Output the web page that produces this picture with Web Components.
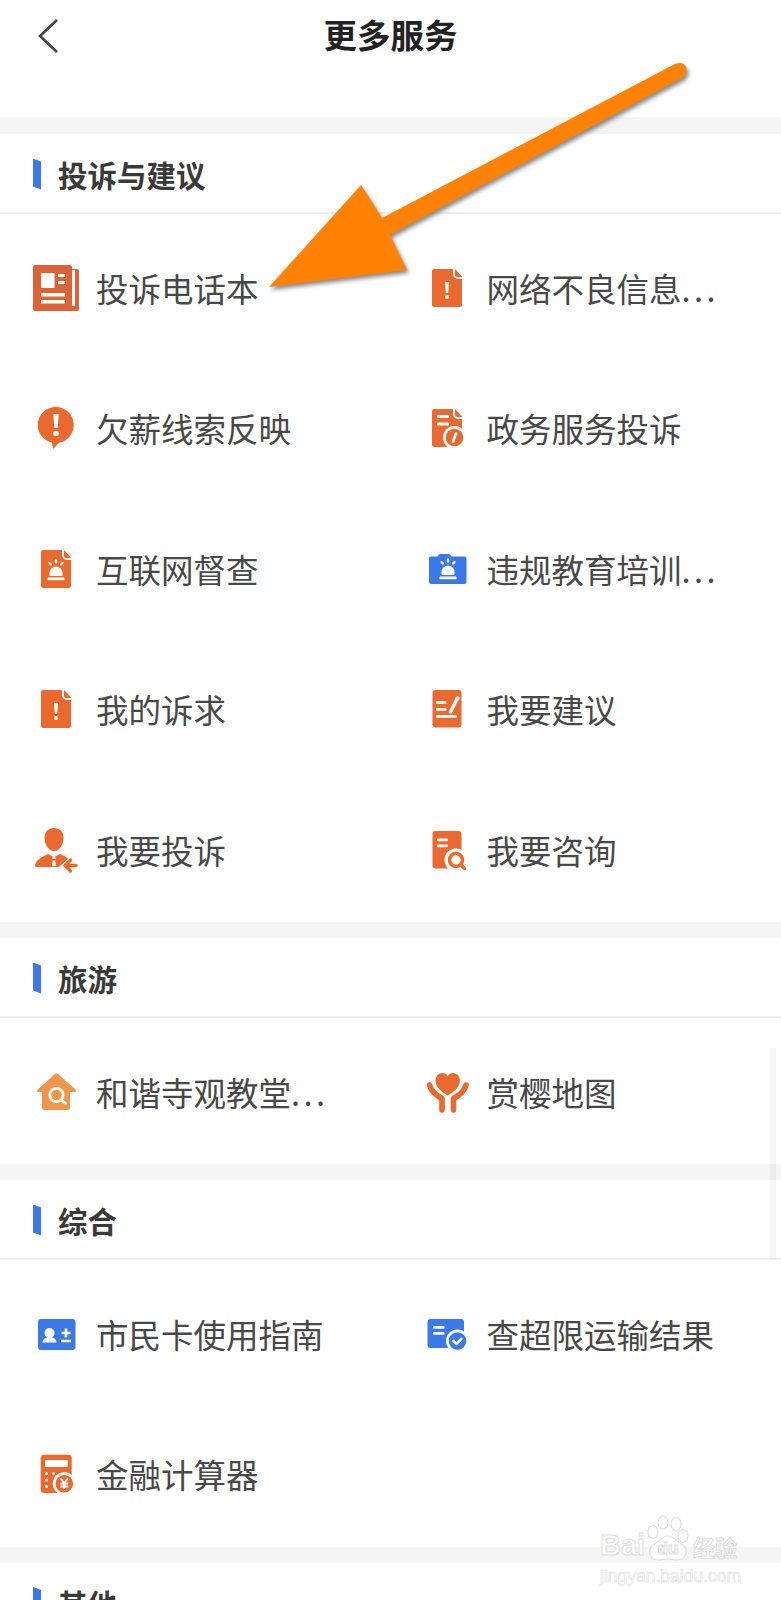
<!DOCTYPE html>
<html lang="zh">
<head>
<meta charset="utf-8">
<title>更多服务</title>
<style>
  html, body { margin: 0; height: 1600px; overflow: hidden; background: #fff; }
  body { font-family: "Noto Sans CJK SC", "Liberation Sans", sans-serif; }
  .dots { letter-spacing: 3.500px; }
</style>
</head>
<body>
<service-page>
  <top-bar label="更多服务"></top-bar>
  <service-section label="投诉与建议">
    <service-item icon="news">投诉电话本</service-item>
    <service-item icon="fileAlert">网络不良信息<span class="dots">...</span></service-item>
    <service-item icon="bubble">欠薪线索反映</service-item>
    <service-item icon="fileInfo">政务服务投诉</service-item>
    <service-item icon="fileSiren">互联网督查</service-item>
    <service-item icon="camSiren">违规教育培训<span class="dots">...</span></service-item>
    <service-item icon="fileAlert">我的诉求</service-item>
    <service-item icon="notePen">我要建议</service-item>
    <service-item icon="person">我要投诉</service-item>
    <service-item icon="docSearch">我要咨询</service-item>
  </service-section>
  <service-section label="旅游">
    <service-item icon="house">和谐寺观教堂<span class="dots">...</span></service-item>
    <service-item icon="heart">赏樱地图</service-item>
  </service-section>
  <service-section label="综合">
    <service-item icon="card">市民卡使用指南</service-item>
    <service-item icon="cardCheck">查超限运输结果</service-item>
    <service-item icon="calc">金融计算器</service-item>
  </service-section>
  <service-section label="其他"></service-section>
  <scroll-track></scroll-track>
  <pointer-arrow></pointer-arrow>
  <paw-mark></paw-mark>
</service-page>

<script>
const ORANGE = "#e9692f";
const BLUE = "#3b78e8";

// document with a folded corner, everything else goes on top of it
const fileBody = (inner, x = 9) => `
  <path fill="${ORANGE}" d="M${x + 2} 5H${x + 21}v5a5 5 0 0 0 5 5h4v26a2 2 0 0 1-2 2H${x + 2}a2 2 0 0 1-2-2V7a2 2 0 0 1 2-2z"/>
  <path fill="${ORANGE}" d="M${x + 23} 5l7.500 8H${x + 25.500}a2.500 2.500 0 0 1-2.500-2.500z"/>
  ${inner}`;

const siren = (dy = 0, dx = 0) => `
  <g transform="translate(${dx} ${dy})" fill="#fff">
    <path d="M19 31v-3a6.500 6.500 0 0 1 13 0v3z"/>
    <rect x="17" y="32.500" width="17" height="2.800" rx=".6"/>
    <g stroke="#fff" stroke-width="2.400" stroke-linecap="round">
      <path d="M25.500 15.500v2M19 18l1.500 1.500M32 18l-1.500 1.500"/>
    </g>
  </g>`;

const badge = (cx, cy, color, inner) => `
  <circle cx="${cx}" cy="${cy}" r="11.500" fill="#fff"/>
  <circle cx="${cx}" cy="${cy}" r="8.800" fill="${color}"/>
  ${inner}`;

const ICONS = {
  news: `
    <path fill="#dc6238" d="M3 1h35a2 2 0 0 1 2 2v2h5a2 2 0 0 1 2 2v38a2 2 0 0 1-2 2H3a2 2 0 0 1-2-2V3a2 2 0 0 1 2-2z"/>
    <g fill="#fff">
      <rect x="40" y="6" width="3" height="36"/>
      <rect x="9" y="9" width="13.500" height="15"/>
      <rect x="26" y="10" width="7" height="3"/>
      <rect x="26" y="17" width="7" height="3"/>
      <rect x="9" y="29" width="24" height="3.500"/>
      <rect x="9" y="36" width="24" height="3.500"/>
    </g>`,
  fileAlert: fileBody(`
    <path fill="#fff" d="M22 18h4l-.8 11h-2.400z"/>
    <circle cx="24" cy="33" r="2" fill="#fff"/>`),
  bubble: `
    <path fill="${ORANGE}" d="M24 3a18 18 0 0 1 3 35.700L21 45l-1-6.400A18 18 0 0 1 24 3z"/>
    <path fill="#fff" d="M21.300 10h5.400l-1 14h-3.400z"/>
    <circle cx="24" cy="29.500" r="2.800" fill="#fff"/>`,
  fileInfo: fileBody(`
    <rect x="14" y="11" width="12" height="3" rx="1" fill="#fff"/>
    <rect x="14" y="18.500" width="12" height="3" rx="1" fill="#fff"/>
    ${badge(31.500, 33.500, ORANGE, `<path d="M33 29.500l-3 8" stroke="#fff" stroke-width="2.600" stroke-linecap="round"/>`)}`),
  fileSiren: fileBody(siren(0, -1.500)),
  camSiren: `
    <path fill="${BLUE}" d="M8 11.500h6.500l1-1.500q.8-1 2-1h8q1.200 0 2 1l1 1.500H41.500a2 2 0 0 1 2 2V37a2 2 0 0 1-2 2H8a2 2 0 0 1-2-2V13.500a2 2 0 0 1 2-2z"/>
    ${siren(-1, -.500)}`,
  notePen: `
    <rect x="9.500" y="5" width="29" height="37.500" rx="3" fill="${ORANGE}"/>
    <g fill="#fff">
      <rect x="13" y="16" width="10.500" height="2.800" rx=".8"/>
      <rect x="13" y="23" width="10.500" height="2.800" rx=".8"/>
      <rect x="13" y="30" width="21" height="2.800" rx=".8"/>
    </g>
    <path d="M27.500 27l6-12" stroke="#fff" stroke-width="3.400" stroke-linecap="round"/>
    <circle cx="34.500" cy="13.500" r="2.200" fill="#fff"/>`,
  person: `
    <path fill="${ORANGE}" d="M22 2c5.500 0 9.500 3.500 9.500 9.500 0 7-4 13.500-9.500 13.500s-9.500-6.500-9.500-13.500C12.500 5.500 16.500 2 22 2z"/>
    <path fill="${ORANGE}" d="M3 40c.5-6 7-9 13-12l6 3 6-3c4 1.500 6.500 3 8 5l-8 7-2 1H4z"/>
    <path fill="#fff" d="M20.500 30.500h3v2.500h-3zM20.800 34.500h2.400l.8 5.500h-4z"/>
    <path d="M44 39.500H33M38.500 34l-5.500 5.500 5.500 5.500" fill="none" stroke="${ORANGE}" stroke-width="3.400" stroke-linecap="round" stroke-linejoin="round"/>`,
  docSearch: `
    <rect x="9.500" y="5" width="29" height="37.500" rx="3" fill="${ORANGE}"/>
    <rect x="14" y="12.500" width="11" height="2.800" rx="1" fill="#fff"/>
    <rect x="14" y="18.500" width="11" height="2.800" rx="1" fill="#fff"/>
    <circle cx="33" cy="34" r="11.500" fill="#fff"/>
    <circle cx="33" cy="34" r="6.500" fill="#fff" stroke="${ORANGE}" stroke-width="3.600"/>
    <path d="M38.500 39.500l3 3" stroke="${ORANGE}" stroke-width="3.200" stroke-linecap="round"/>`,
  house: `
    <path fill="#f0964c" d="M23 6q1.500-1.300 3 0l18 16q1 1.500-.8 2H38v16a2 2 0 0 1-2 2H12a2 2 0 0 1-2-2V24H6q-1.800-.5-.8-2z"/>
    <circle cx="24.500" cy="27" r="6.700" fill="none" stroke="#fff" stroke-width="2.800"/>
    <path d="M29.500 32l4 3.500" stroke="#fff" stroke-width="2.800" stroke-linecap="round"/>`,
  heart: `
    <path fill="${ORANGE}" d="M24.700 27.500C18 23.500 12.500 19 12.500 12.500 12.500 8 15.800 5 19.500 5c2.300 0 4 1 5.200 3 1.200-2 2.900-3 5.200-3 3.700 0 7 3 7 7.500 0 6.500-5.500 11-12.200 15z"/>
    <g fill="none" stroke="${ORANGE}" stroke-width="5.600" stroke-linecap="round" stroke-linejoin="round">
      <path d="M6.500 17q2 8 12.500 13.500V42"/>
      <path d="M43 17q-2 8-12.500 13.500V42"/>
    </g>`,
  card: `
    <rect x="6" y="9" width="37.500" height="31" rx="3" fill="${BLUE}"/>
    <circle cx="17.500" cy="23" r="5" fill="#fff"/>
    <path fill="#fff" d="M10.500 32.500c0-3.500 3-4.500 5-5.500h4c2 1 5 2 5 5.500z"/>
    <path d="M29.500 23h9M34 18.500v9M29 31h10" stroke="#fff" stroke-width="2.600"/>`,
  cardCheck: `
    <rect x="4.500" y="9" width="36.500" height="29" rx="3" fill="${BLUE}"/>
    <rect x="10" y="16" width="11.500" height="2.800" rx=".8" fill="#fff"/>
    <rect x="10" y="22" width="11.500" height="2.800" rx=".8" fill="#fff"/>
    ${badge(34.500, 31, BLUE, `<path d="M30.500 31l3 2.800 4.800-5" fill="none" stroke="#fff" stroke-width="2.600" stroke-linecap="round" stroke-linejoin="round"/>`)}`,
  calc: `
    <rect x="8.700" y="4.700" width="31" height="38.300" rx="3.500" fill="${ORANGE}"/>
    <rect x="13" y="10" width="22.700" height="7" rx="1" fill="#fff"/>
    <g fill="#fff">
      <circle cx="14.500" cy="23.500" r="1.500"/><circle cx="21.500" cy="23.500" r="1.500"/>
      <circle cx="14.500" cy="30" r="1.500"/><circle cx="14.500" cy="36.500" r="1.500"/>
    </g>
    ${badge(32.300, 33.700, ORANGE, `<path d="M28.800 28.500l3.500 4.500 3.500-4.500M32.300 33v6M28.300 33.500h8M28.300 36.500h8" fill="none" stroke="#fff" stroke-width="1.800"/>`)}`
};

// little helper, all the elements below only differ in markup
class ShadowBase extends HTMLElement {
  constructor() {
    super();
    this.attachShadow({ mode: "open" });
    this.shadowRoot.innerHTML = this.markup();
  }
  markup() { return ""; }
}

class ServicePage extends ShadowBase {
  markup() {
    return `
    <style>
      :host { display: block; position: relative; width: 781px; height: 1600px; overflow: hidden; background: #f5f5f5; }
      .stack { display: flex; flex-direction: column; gap: 16px; }
    </style>
    <div class="stack"><slot></slot></div>`;
  }
}

class TopBar extends ShadowBase {
  markup() {
    return `
    <style>
      :host { display: block; height: 117px; margin-bottom: 1px; background: #fff; }
      .bar { display: flex; justify-content: center; position: relative; padding-top: 10px; }
      h1 { margin: 0; font-size: 33.500px; line-height: 48px; font-weight: 700; color: #222; }
      svg { position: absolute; left: 36px; top: 18px; }
    </style>
    <div class="bar">
      <svg width="24" height="36" viewBox="0 0 24 36"><path d="M21 2L4 18l17 16" fill="none" stroke="#444" stroke-width="2.600"/></svg>
      <h1>${this.getAttribute("label")}</h1>
    </div>`;
  }
}

class ServiceSection extends ShadowBase {
  markup() {
    return `
    <style>
      :host { display: block; background: #fff; }
      header { display: flex; align-items: center; gap: 17px; height: 80px; padding-left: 33px; padding-top: 2px; box-sizing: border-box; border-bottom: 2px solid #eee; }
      i { width: 8px; height: 31px; background: ${BLUE}; clip-path: polygon(0 0, 100% 10%, 100% 100%, 0 90%); }
      h2 { margin: 0; font-size: 29.500px; line-height: 40px; font-weight: 700; color: #3a3a3a; }
      .grid { display: grid; grid-template-columns: 1fr 1fr; grid-auto-rows: 140.500px; padding-top: 5.500px; }
    </style>
    <header><i></i><h2>${this.getAttribute("label")}</h2></header>
    <div class="grid"><slot></slot></div>`;
  }
}

class ServiceItem extends ShadowBase {
  markup() {
    return `
    <style>
      :host { display: flex; align-items: center; gap: 16px; padding-left: 32px; font-size: 32.500px; color: #484848; }
      svg { flex: none; width: 48px; height: 48px; margin-top: -4px; overflow: visible; }
      span { white-space: nowrap; line-height: 44px; margin-top: -4px; }
    </style>
    <svg viewBox="0 0 48 48">${ICONS[this.getAttribute("icon")] || ""}</svg>
    <span><slot></slot></span>`;
  }
}

class ScrollTrack extends ShadowBase {
  markup() {
    return `<style>:host { position: absolute; left: 770px; top: 1048px; width: 6px; height: 212px; background: rgba(0, 0, 0, .035); }</style>`;
  }
}

class PointerArrow extends ShadowBase {
  markup() {
    return `
    <style>
      :host { position: absolute; inset: 0; pointer-events: none; }
      svg { display: block; filter: drop-shadow(2px 3px 2px rgba(40, 40, 40, .55)); }
    </style>
    <svg width="781" height="600" viewBox="0 0 781 600">
      <path fill="#ff8205" d="M269 287L361 185l21 33L675 64q8-3 11 3 2 7-4 11L390 235l17 35z"/>
    </svg>`;
  }
}

class PawMark extends ShadowBase {
  markup() {
    const ink = "color: #fff; -webkit-text-stroke: 1px #dedede; font-weight: 700;";
    return `
    <style>
      :host { position: absolute; left: 600px; top: 1515px; width: 145px; display: flex; flex-direction: column; font-family: "Liberation Sans", "Noto Sans CJK SC", sans-serif; }
      .row { display: flex; align-items: flex-end; height: 47px; }
      .bai { ${ink} font-size: 29px; line-height: 34px; width: 45px; }
      .jy { ${ink} font-size: 22px; line-height: 32px; font-family: "Noto Sans CJK SC", sans-serif; margin-left: 2px; }
      .url { color: #fff; -webkit-text-stroke: .7px #e2e2e2; font-size: 17.500px; line-height: 20px; margin-top: 4px; white-space: nowrap; }
      svg { width: 46px; height: 47px; flex: none; }
    </style>
    <div class="row">
      <span class="bai">Bai</span>
      <svg viewBox="0 0 46 47" fill="#fff" stroke="#dedede" stroke-width="1.200">
        <ellipse cx="8" cy="17" rx="5" ry="6.500"/>
        <ellipse cx="18" cy="7.500" rx="5" ry="6.500"/>
        <ellipse cx="31" cy="9" rx="5" ry="6.500"/>
        <ellipse cx="38" cy="21" rx="5" ry="6.500"/>
        <path d="M23 21c6 0 9 6 15 9 6 5 3 15-6 15-4 0-6-1-9-1s-6 1-9 1c-10 0-12-10-6-15 6-3 9-9 15-9z"/>
        <text x="23" y="39" text-anchor="middle" font-size="17" font-weight="700" font-family="Liberation Sans, sans-serif">du</text>
      </svg>
      <span class="jy">经验</span>
    </div>
    <div class="url">jingyan.baidu.com</div>`;
  }
}

customElements.define("service-page", ServicePage);
customElements.define("top-bar", TopBar);
customElements.define("service-section", ServiceSection);
customElements.define("service-item", ServiceItem);
customElements.define("scroll-track", ScrollTrack);
customElements.define("pointer-arrow", PointerArrow);
customElements.define("paw-mark", PawMark);
</script>
</body>
</html>
